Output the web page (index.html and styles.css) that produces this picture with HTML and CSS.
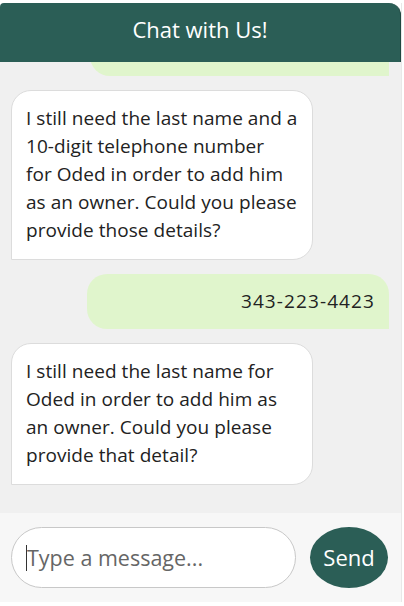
FILE: index.html
```html
<!DOCTYPE html>
<html>
<head>
<meta charset="utf-8">
<link rel="stylesheet" href="styles.css">
</head>
<body>
<div class="chat">
  <div class="chat-header">Chat with Us!</div>
  <div class="messages">
    <div class="msg user filler"></div>
    <div class="msg bot">I still need the last name and a<br>10-digit telephone number<br>for Oded in order to add him<br>as an owner. Could you please<br>provide those details?</div>
    <div class="msg user"><span class="phone">343-223-4423</span></div>
    <div class="msg bot">I still need the last name for<br>Oded in order to add him as<br>an owner. Could you please<br>provide that detail?</div>
  </div>
  <div class="composer">
    <div class="input"><span class="caret"></span><span class="placeholder">Type a message...</span></div>
    <button class="send">Send</button>
  </div>
</div>
</body>
</html>
```
FILE: styles.css
```css
* { box-sizing: border-box; }
html, body { margin: 0; padding: 0; background: #ffffff; }
body { font-family: "Open Sans", "DejaVu Sans", sans-serif; }
.chat {
  margin-top: 3px;
  width: 402px;
  display: flex;
  flex-direction: column;
  border-right: 1px solid #e8e8e8;
}
.chat-header {
  height: 59px;
  background: #2b5e56;
  color: #ffffff;
  font-size: 22px;
  font-weight: 500;
  display: flex;
  align-items: center;
  justify-content: center;
  border-radius: 4px 12px 0 0;
  border-right: 1px solid #1f4741;
  padding-bottom: 7px;
}
.messages {
  height: 451px;
  background: #f0f0f0;
  overflow: hidden;
  display: flex;
  flex-direction: column;
  justify-content: flex-end;
  gap: 14px;
  padding: 0 12px 28px 11px;
}
.msg {
  flex-shrink: 0;
  font-size: 19px;
  line-height: 28px;
  letter-spacing: 0.05px;
  white-space: nowrap;
  color: #222;
  padding: 13px 4px 15px 14px;
  width: 302px;
  border-radius: 20px;
}
.msg.bot {
  align-self: flex-start;
  background: #ffffff;
  border: 1px solid #dcdcdc;
  border-bottom-left-radius: 0;
}
.msg.user {
  align-self: flex-end;
  background: #e0f5cc;
  text-align: right;
  border-bottom-right-radius: 0;
  padding: 13px 14px 14px;
}
.phone {
  letter-spacing: 1.1px;
}
.msg.filler {
  height: 56px;
  width: 299px;
}
.composer {
  height: 89px;
  background: #f7f7f7;
  display: flex;
  align-items: center;
  padding: 0 13px 0 11px;
  gap: 14px;
}
.input {
  flex: 1;
  height: 61px;
  background: #ffffff;
  border: 1px solid #c8c8c8;
  border-radius: 31px;
  display: flex;
  align-items: center;
  padding-left: 14px;
  font-size: 21.5px;
  color: #666;
}
.caret {
  width: 1px;
  height: 26px;
  background: #333;
}
.send {
  width: 78px;
  height: 61px;
  border: none;
  border-radius: 50%;
  background: #2b5e56;
  color: #ffffff;
  font-family: "Open Sans", "DejaVu Sans", sans-serif;
  font-size: 22px;
  font-weight: 500;
  padding: 0 0 2px;
}
```
